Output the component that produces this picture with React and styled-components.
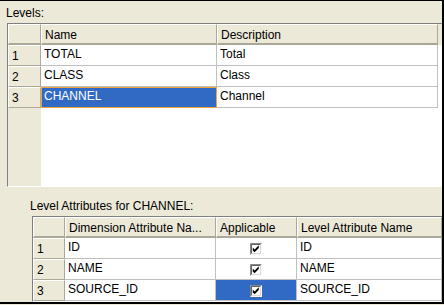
import React from "react";
import styled, { createGlobalStyle, css } from "styled-components";

const GlobalStyle = createGlobalStyle`
  html, body {
    margin: 0;
    padding: 0;
    background: #ece9d8;
  }
  body {
    font-family: "Liberation Sans", Arial, sans-serif;
    font-size: 12px;
    color: #000;
  }
`;

const Frame = styled.div`
  box-sizing: border-box;
  width: 444px;
  height: 304px;
  border-top: 1px solid #000;
  border-right: 2px solid #000;
  border-bottom: 2px solid #000;
  overflow: hidden;
  display: flex;
  flex-direction: column;
  padding: 5px 0 0 6px;
  background: #ece9d8;
`;

const Section = styled.div`
  display: flex;
  flex-direction: column;
  flex: ${(p) => (p.$grow ? "1" : "none")};
  margin-left: ${(p) => p.$indent || 0}px;
  margin-top: ${(p) => p.$top || 0}px;
  min-height: 0;
`;

const Label = styled.div`
  line-height: 14px;
  height: 14px;
  margin-bottom: 3px;
  white-space: nowrap;
`;

const Table = styled.div`
  box-sizing: border-box;
  display: flex;
  margin-left: ${(p) => p.$offset}px;
  height: ${(p) => (p.$height ? `${p.$height}px` : "auto")};
  flex: ${(p) => (p.$height ? "none" : "1")};
  border-top: 1px solid #7f7f7f;
  border-left: 1px solid #7f7f7f;
  border-bottom: 1px solid #ffffff;
  background: #ffffff;
  overflow: hidden;
`;

const RowHeaderColumn = styled.div`
  flex: none;
  width: ${(p) => p.$w}px;
  background: #ece9d8;
  display: flex;
  flex-direction: column;
`;

const DataArea = styled.div`
  flex: 1;
  display: flex;
  flex-direction: column;
  background: #ffffff;
  min-width: 0;
`;

const HeaderRow = styled.div`
  display: flex;
  flex: none;
  height: 21px;
  background: #ece9d8;
`;

const raised = css`
  box-sizing: border-box;
  height: 21px;
  border-top: 1px solid #ffffff;
  border-left: 1px solid #ffffff;
  border-right: 1px solid #aca899;
  white-space: nowrap;
  overflow: hidden;
`;

const HeaderCell = styled.div`
  ${raised}
  flex: none;
  width: ${(p) => p.$w}px;
  border-bottom: 2px solid #aca899;
  padding: 2px 0 0 3px;
  line-height: 16px;
`;

const RowHeaderCell = styled.div`
  ${raised}
  flex: none;
  width: 100%;
  border-bottom: ${(p) => (p.$corner ? "2px" : "1px")} solid #aca899;
  padding: 2px 0 0 3px;
  line-height: 17px;
`;

const Row = styled.div`
  display: flex;
  flex: none;
  height: 21px;
`;

const Cell = styled.div`
  box-sizing: border-box;
  flex: none;
  width: ${(p) => p.$w}px;
  height: 21px;
  border-right: 1px solid #c0c0c0;
  border-bottom: 1px solid #c0c0c0;
  padding-left: 3px;
  line-height: 18px;
  white-space: nowrap;
  overflow: hidden;
  display: flex;
  align-items: flex-start;
  justify-content: ${(p) => (p.$center ? "center" : "flex-start")};
  ${(p) =>
    p.$selected &&
    css`
      background: #316ac5;
      color: #ffffff;
    `}
  ${(p) =>
    p.$focus &&
    css`
      border-right-color: #f0a43a;
      border-bottom-color: #f0a43a;
      box-shadow: inset 1px 1px 0 #f0a43a;
    `}
`;

const CheckWrap = styled.span`
  display: block;
  width: 12px;
  height: 12px;
  margin-top: 4px;
  margin-left: -3px;
`;

const CheckBox = () => (
  <CheckWrap>
    <svg width="12" height="12" viewBox="0 0 13 13">
      <rect x="0" y="0" width="13" height="13" fill="#ffffff" />
      <path d="M0.5 12.5 V0.5 H12.5" stroke="#808080" fill="none" />
      <path d="M1.5 11.5 V1.5 H11.5" stroke="#404040" fill="none" />
      <path d="M1.5 11.5 H11.5 V1.5" stroke="#d4d0c8" fill="none" />
      <polygon points="3,5 5,7 9.5,2.5 9.5,5.5 5,10 3,8" fill="#000000" />
    </svg>
  </CheckWrap>
);

const levels = [
  { n: "1", name: "TOTAL", desc: "Total" },
  { n: "2", name: "CLASS", desc: "Class" },
  { n: "3", name: "CHANNEL", desc: "Channel", sel: true },
];

const attrs = [
  { n: "1", dim: "ID", lvl: "ID" },
  { n: "2", dim: "NAME", lvl: "NAME" },
  { n: "3", dim: "SOURCE_ID", lvl: "SOURCE_ID", sel: true },
];

export default function App() {
  return (
    <>
      <GlobalStyle />
      <Frame>
        <Section>
          <Label>Levels:</Label>
          <Table $offset={1} $height={164}>
            <RowHeaderColumn $w={33}>
              <RowHeaderCell $corner />
              {levels.map((r) => (
                <RowHeaderCell key={r.n}>{r.n}</RowHeaderCell>
              ))}
            </RowHeaderColumn>
            <DataArea>
              <HeaderRow>
                <HeaderCell $w={176}>Name</HeaderCell>
                <HeaderCell $w={221}>Description</HeaderCell>
              </HeaderRow>
              {levels.map((r) => (
                <Row key={r.n}>
                  <Cell $w={176} $selected={r.sel} $focus={r.sel}>
                    {r.name}
                  </Cell>
                  <Cell $w={221}>{r.desc}</Cell>
                </Row>
              ))}
            </DataArea>
          </Table>
        </Section>
        <Section $indent={24} $top={12} $grow>
          <Label>Level Attributes for CHANNEL:</Label>
          <Table $offset={2}>
            <RowHeaderColumn $w={32}>
              <RowHeaderCell $corner />
              {attrs.map((r) => (
                <RowHeaderCell key={r.n}>{r.n}</RowHeaderCell>
              ))}
            </RowHeaderColumn>
            <DataArea>
              <HeaderRow>
                <HeaderCell $w={151}>Dimension Attribute Na...</HeaderCell>
                <HeaderCell $w={81}>Applicable</HeaderCell>
                <HeaderCell $w={145}>Level Attribute Name</HeaderCell>
              </HeaderRow>
              {attrs.map((r) => (
                <Row key={r.n}>
                  <Cell $w={151}>{r.dim}</Cell>
                  <Cell $w={81} $center $selected={r.sel}>
                    <CheckBox />
                  </Cell>
                  <Cell $w={145}>{r.lvl}</Cell>
                </Row>
              ))}
            </DataArea>
          </Table>
        </Section>
      </Frame>
    </>
  );
}
